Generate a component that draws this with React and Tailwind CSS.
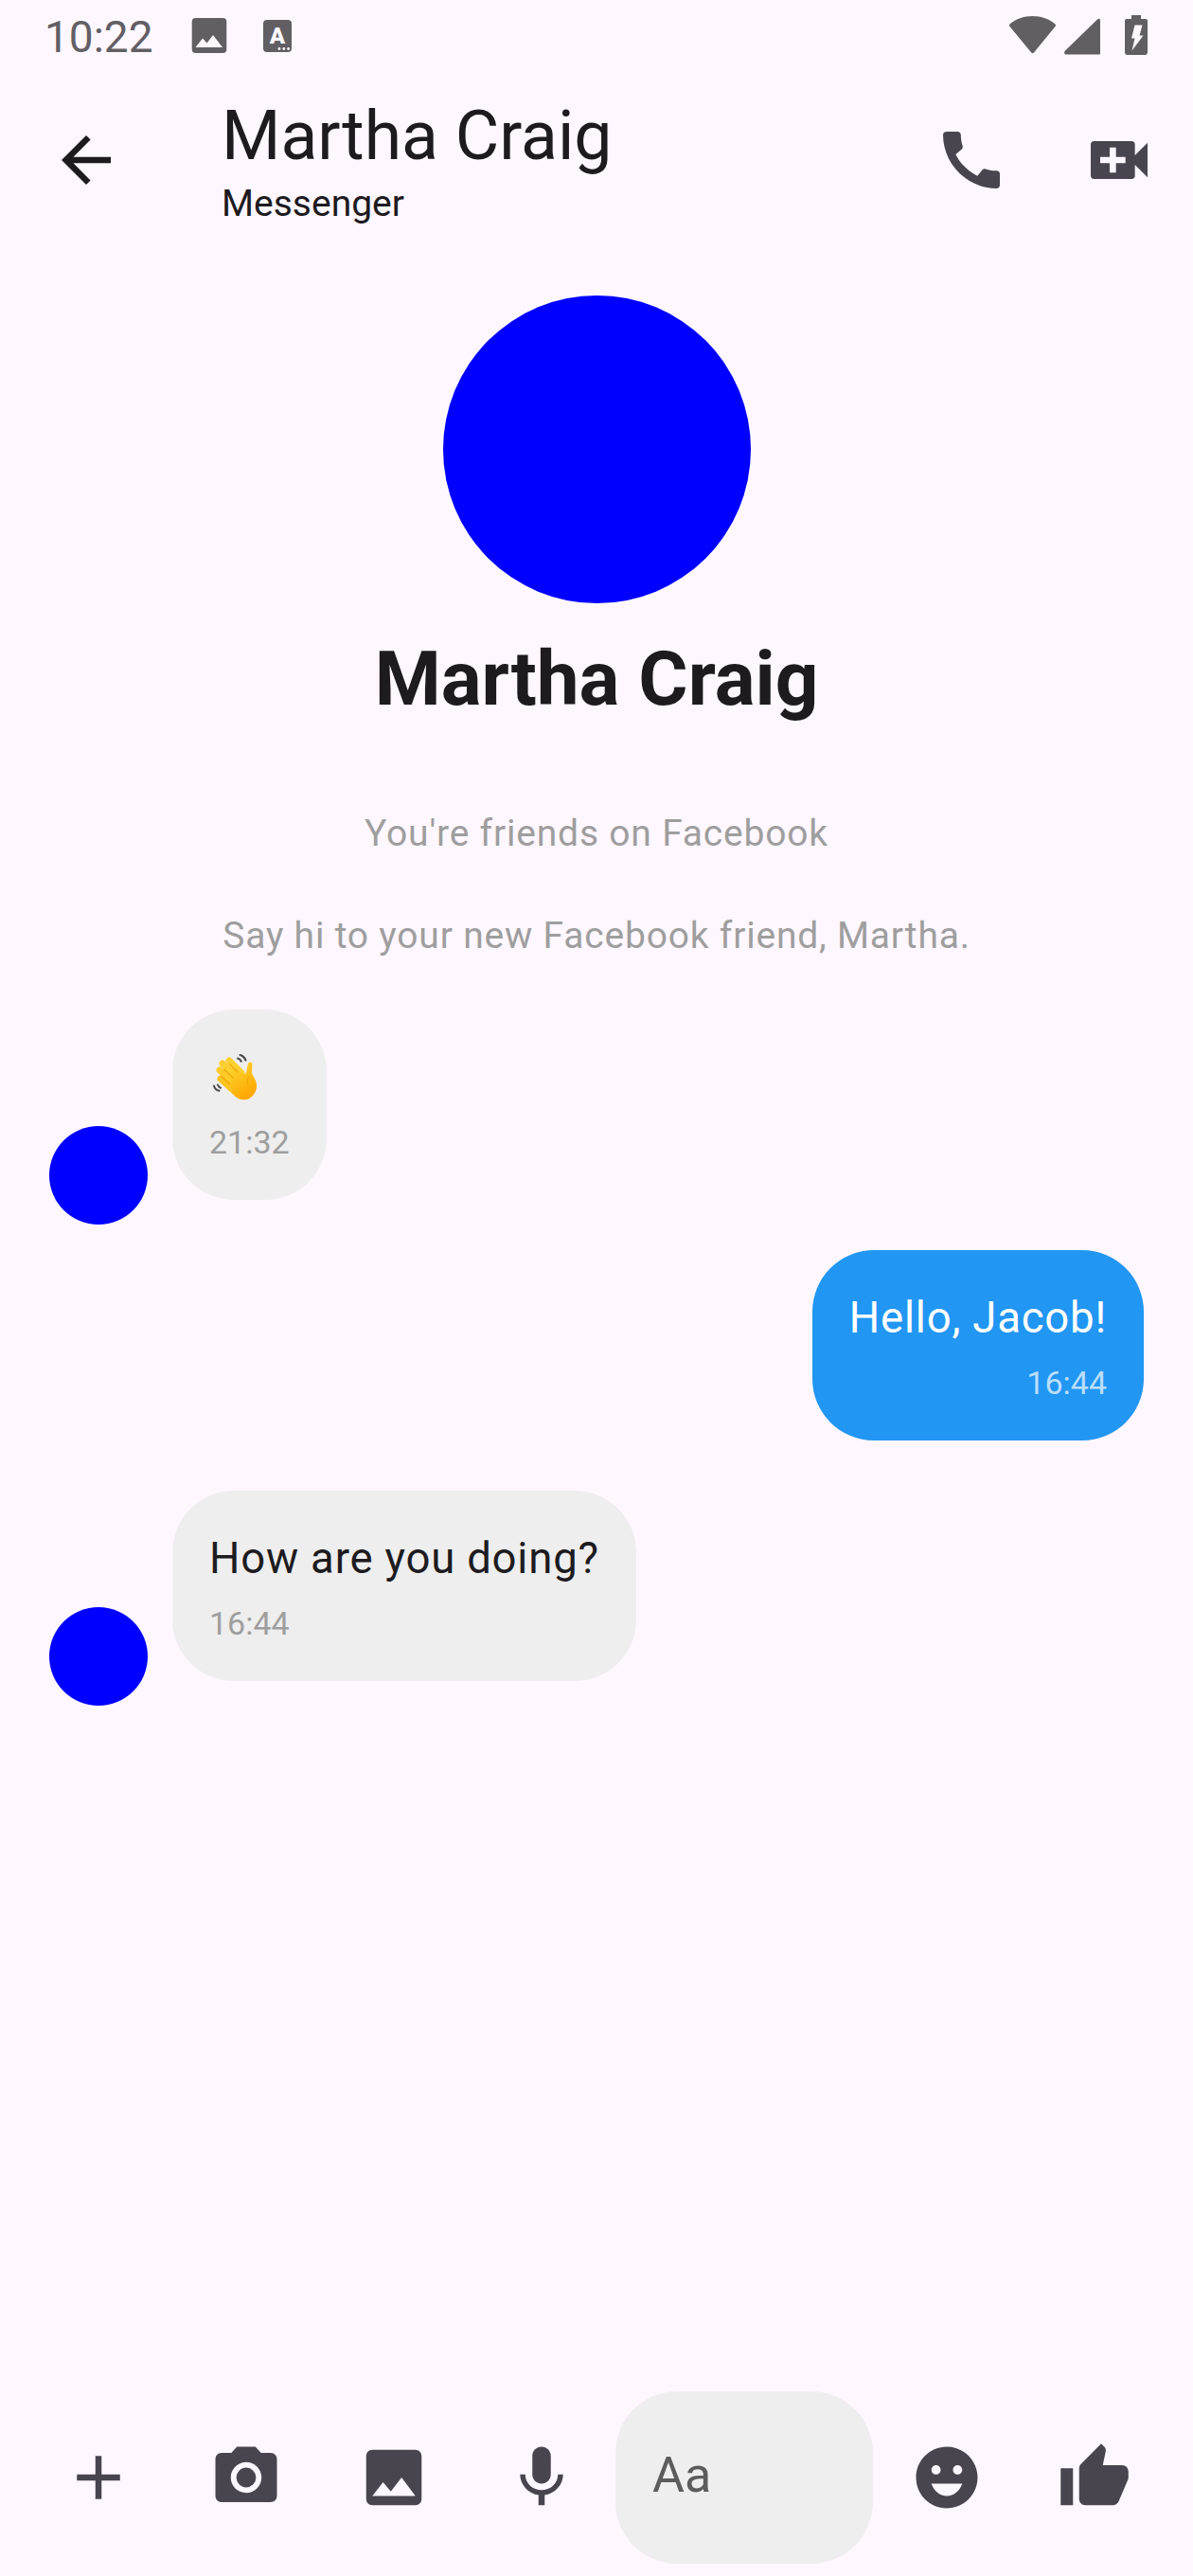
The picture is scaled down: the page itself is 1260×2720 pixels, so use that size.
import React from "react";

const MdIcon = ({ d, className, children }) => (
    <svg viewBox="0 0 24 24" fill="currentColor" className={className}>
        {children}
        {d && <path d={d} />}
    </svg>
);

const ToolButton = ({ d, children }) => (
    <button className="flex w-[156px] shrink-0 items-center justify-center text-[#49454f]">
        <MdIcon d={d} className="h-[78px] w-[78px]">{children}</MdIcon>
    </button>
);

const WaveEmoji = () => (
    <svg viewBox="10 10 48 50" className="ml-[4px] h-[50px] w-[48px]">
        <defs>
            <linearGradient id="hand" x1="0" y1="0" x2="0.5" y2="1">
                <stop offset="0" stopColor="#fdd835" />
                <stop offset="1" stopColor="#ffa800" />
            </linearGradient>
        </defs>
        <path d="M38.500 11c2.500 .6 4.800 2.600 6 5.500M36 14.500c1.700 .4 3 1.500 3.800 3.200" fill="none" stroke="#4a4a4a" strokeWidth="2" strokeLinecap="round" />
        <path d="M11 43.500c.6 2.500 2.700 4.600 5.500 5.300M15 42.500c.5 1.500 1.500 2.600 3 3.200" fill="none" stroke="#4a4a4a" strokeWidth="2" strokeLinecap="round" />
        <g fill="none" strokeWidth="7" strokeLinecap="round">
            <path d="M27 17l13 13" stroke="#fdd02f" />
            <path d="M20 20l16 15" stroke="#fdcf2e" />
            <path d="M17 27l14 13" stroke="#fdca28" />
            <path d="M18 36l13 12" stroke="#fcc321" />
        </g>
        <path
            d="M33 25l9 6c1.500 .5 2.500 0 3-1.500l2-9.500c.5-2.500 4.500-2 4.500 .8 0 3.500-.8 7-.4 9.500 .8 3.500 4.900 6.500 4.900 13 0 9-7 15.500-14 15-5.500-.4-9-3.500-12-7l-3-25z"
            fill="url(#hand)"
        />
        <path d="M27.500 20.500l8.500 8.500M21.500 26l9.500 9M19 33.500l8.500 8M47.500 34c-2 3-1.800 6.500 0 9.500" fill="none" stroke="#eda600" strokeWidth="1.100" strokeLinecap="round" />
    </svg>
);

const StatusLeft = () => (
    <svg viewBox="0 0 130 60" className="h-[60px] w-[130px]">
        <rect x="12.700" y="10" width="36.600" height="37" rx="4" fill="#625f64" />
        <path d="M16.500 41l7.500-9.500 4.500 5 6.500-8.500 10 13z" fill="#fef7ff" />
        <rect x="88" y="12" width="30" height="34" rx="4" fill="#625f64" />
        <text x="103" y="37" textAnchor="middle" fontFamily="Roboto, sans-serif" fontWeight="900" fontSize="24" fill="#fef7ff">A</text>
        <circle cx="105" cy="42.500" r="1.400" fill="#fef7ff" />
        <circle cx="109.800" cy="42.500" r="1.400" fill="#fef7ff" />
        <circle cx="114.600" cy="42.500" r="1.400" fill="#fef7ff" />
    </svg>
);

const StatusRight = () => (
    <svg viewBox="0 0 170 60" className="h-[60px] w-[170px]">
        <path d="M12 16c6-5 14-8 23.500-8S53 11 59 16c1.200 1 1.200 2 .5 3L37 46.500c-.8 1-2 1-2.800 0L11.500 19c-.7-1-.7-2 .5-3z" fill="#625f64" />
        <path d="M70 44.500L104 11.500c1.500-1.300 3-.5 3 1V47c0 1-.5 1.500-1.500 1.500H71c-2 0-2.500-2.500-1-4z" fill="#625f64" />
        <path d="M140 7h10v4h5c1.500 0 2 1 2 2v33c0 2-1 3-2.500 3h-19c-1.500 0-2.500-1-2.500-3V13c0-1 .5-2 2-2h5z" fill="#625f64" />
        <path d="M143.500 17.500h8l-3 11h4l-12 16 3-13h-3.500z" fill="#fef7ff" />
    </svg>
);

const Bubble = ({ mine, text, time, children }) => (
    <div className={`rounded-[65px] p-[39px] ${mine ? "bg-[#2196f3]" : "bg-[#eeeeee]"}`}>
        <div className={`flex h-[65px] items-center text-[45.5px] leading-[65px] tracking-[0.8px] whitespace-nowrap ${mine ? "text-white" : "text-[#1d1b20]"}`}>
            {text}
            {children}
        </div>
        <div className={`mt-[15px] text-[34px] leading-[43px] ${mine ? "text-right text-white/70" : "text-[#9e9e9e]"}`}>
            {time}
        </div>
    </div>
);

const Received = ({ text, time, children }) => (
    <div className="flex items-end gap-[26px] px-[52px]">
        <div className="-mb-[26px] h-[104px] w-[104px] shrink-0 rounded-full bg-[#0000ff]"></div>
        <Bubble text={text} time={time}>{children}</Bubble>
    </div>
);

const App = () => {
    return (
        <div className="flex h-[2720px] w-[1260px] flex-col overflow-hidden bg-[#fef7ff] font-['Roboto',sans-serif]">
            {/* status bar */}
            <div className="flex h-[78px] items-center">
                <span className="ml-[47px] text-[46px] leading-[78px] text-[#625f64]">10:22</span>
                <div className="ml-auto mr-[35px] flex w-[1035px] justify-between">
                    <StatusLeft />
                    <StatusRight />
                </div>
            </div>

            {/* app bar */}
            <header className="flex h-[182px] items-center">
                <div className="flex w-[182px] shrink-0 items-center justify-center text-[#1d1b20]">
                    <MdIcon d="M20 11H7.830l5.590-5.590L12 4l-8 8 8 8 1.410-1.410L7.830 13H20v-2z" className="h-[78px] w-[78px]" />
                </div>
                <div className="ml-[52px] flex-1 text-[#1d1b20]">
                    <h1 className="text-[71.5px] leading-[88px]">Martha Craig</h1>
                    <p className="mt-[4px] text-[39px] leading-[46px]">Messenger</p>
                </div>
                <div className="flex w-[156px] items-center justify-center text-[#49454f]">
                    <MdIcon d="M20.010 15.380c-1.230 0-2.420-.2-3.530-.56-.35-.12-.74-.03-1.010.24l-1.570 1.970c-2.830-1.350-5.480-3.900-6.890-6.830l1.950-1.660c.27-.28.35-.67.24-1.020-.37-1.110-.56-2.300-.56-3.530 0-.54-.45-.99-.99-.99H4.190C3.650 3 3 3.240 3 3.990 3 13.280 10.730 21 20.010 21c.71 0 .99-.63.99-1.180v-3.450c0-.54-.45-.99-.99-.99z" className="h-[80px] w-[80px]" />
                </div>
                <div className="flex w-[156px] items-center justify-center text-[#49454f]">
                    <MdIcon d="M17 10.500V7c0-.55-.45-1-1-1H4c-.55 0-1 .45-1 1v10c0 .55.45 1 1 1h12c.55 0 1-.45 1-1v-3.500l4 4v-11l-4 4zM14 13h-3v3H9v-3H6v-2h3V8h2v3h3v2z" className="h-[80px] w-[80px]" />
                </div>
            </header>

            {/* conversation */}
            <main className="flex flex-1 flex-col">
                <div className="mt-[52px] flex flex-col items-center">
                    <div className="h-[325px] w-[325px] rounded-full bg-[#0000ff]"></div>
                    <h2 className="mt-[34px] text-[80px] leading-[92px] font-bold text-[#1d1b20]">Martha Craig</h2>
                    <p className="mt-[91px] text-[39px] leading-[52px] tracking-[0.8px] text-[#9e9e9e]">You're friends on Facebook</p>
                    <p className="mt-[56px] text-[39px] leading-[52px] tracking-[0.8px] text-[#9e9e9e]">Say hi to your new Facebook friend, Martha.</p>
                </div>

                <div className="mt-[52px] flex flex-col gap-[53px]">
                    <Received time="21:32">
                        <WaveEmoji />
                    </Received>
                    <div className="flex justify-end px-[52px]">
                        <Bubble mine text="Hello, Jacob!" time="16:44" />
                    </div>
                    <Received text="How are you doing?" time="16:44" />
                </div>
            </main>

            {/* input bar */}
            <footer className="flex h-[182px] mb-[13px] px-[26px]">
                <ToolButton d="M19 13h-6v6h-2v-6H5v-2h6V5h2v6h6v2z" />
                <ToolButton d="M9 2L7.170 4H4c-1.100 0-2 .9-2 2v12c0 1.100.9 2 2 2h16c1.100 0 2-.9 2-2V6c0-1.100-.9-2-2-2h-3.170L15 2H9zm3 15c-2.760 0-5-2.240-5-5s2.240-5 5-5 5 2.240 5 5-2.240 5-5 5z">
                    <circle cx="12" cy="12" r="3.200" />
                </ToolButton>
                <ToolButton d="M21 19V5c0-1.100-.9-2-2-2H5c-1.100 0-2 .9-2 2v14c0 1.100.9 2 2 2h14c1.100 0 2-.9 2-2zM8.500 13.500l2.500 3.010L14.500 12l4.500 6H5l3.500-4.500z" />
                <ToolButton d="M12 14c1.660 0 2.990-1.340 2.990-3L15 5c0-1.660-1.340-3-3-3S9 3.340 9 5v6c0 1.660 1.340 3 3 3zm5.300-3c0 3-2.540 5.100-5.300 5.100S6.700 14 6.700 11H5c0 3.410 2.720 6.230 6 6.720V21h2v-3.280c3.280-.48 6-3.300 6-6.720h-1.700z" />
                <div className="flex flex-1 items-center rounded-[65px] bg-[#eeeeee] pl-[39px] pb-[4px] text-[52px] text-[#5c5c5c]">Aa</div>
                <ToolButton d="M11.990 2C6.470 2 2 6.480 2 12s4.470 10 9.990 10C17.520 22 22 17.520 22 12S17.520 2 11.990 2zM8.500 8c.83 0 1.500.67 1.500 1.500S9.330 11 8.500 11 7 10.330 7 9.500 7.670 8 8.500 8zM12 18c-2.280 0-4.220-1.660-5-4h10c-.78 2.340-2.720 4-5 4zm3.500-7c-.83 0-1.500-.67-1.500-1.500S14.670 8 15.500 8s1.500.67 1.500 1.500-.67 1.500-1.500 1.500z" />
                <ToolButton d="M1 21h4V9H1v12zm22-11c0-1.100-.9-2-2-2h-6.310l.95-4.570.03-.32c0-.41-.17-.79-.44-1.060L14.170 1 7.590 7.590C7.220 7.950 7 8.450 7 9v10c0 1.100.9 2 2 2h9c.83 0 1.540-.5 1.840-1.220l3.020-7.050c.09-.23.14-.47.14-.73v-2z" />
            </footer>
        </div>
    );
};

export default App;
